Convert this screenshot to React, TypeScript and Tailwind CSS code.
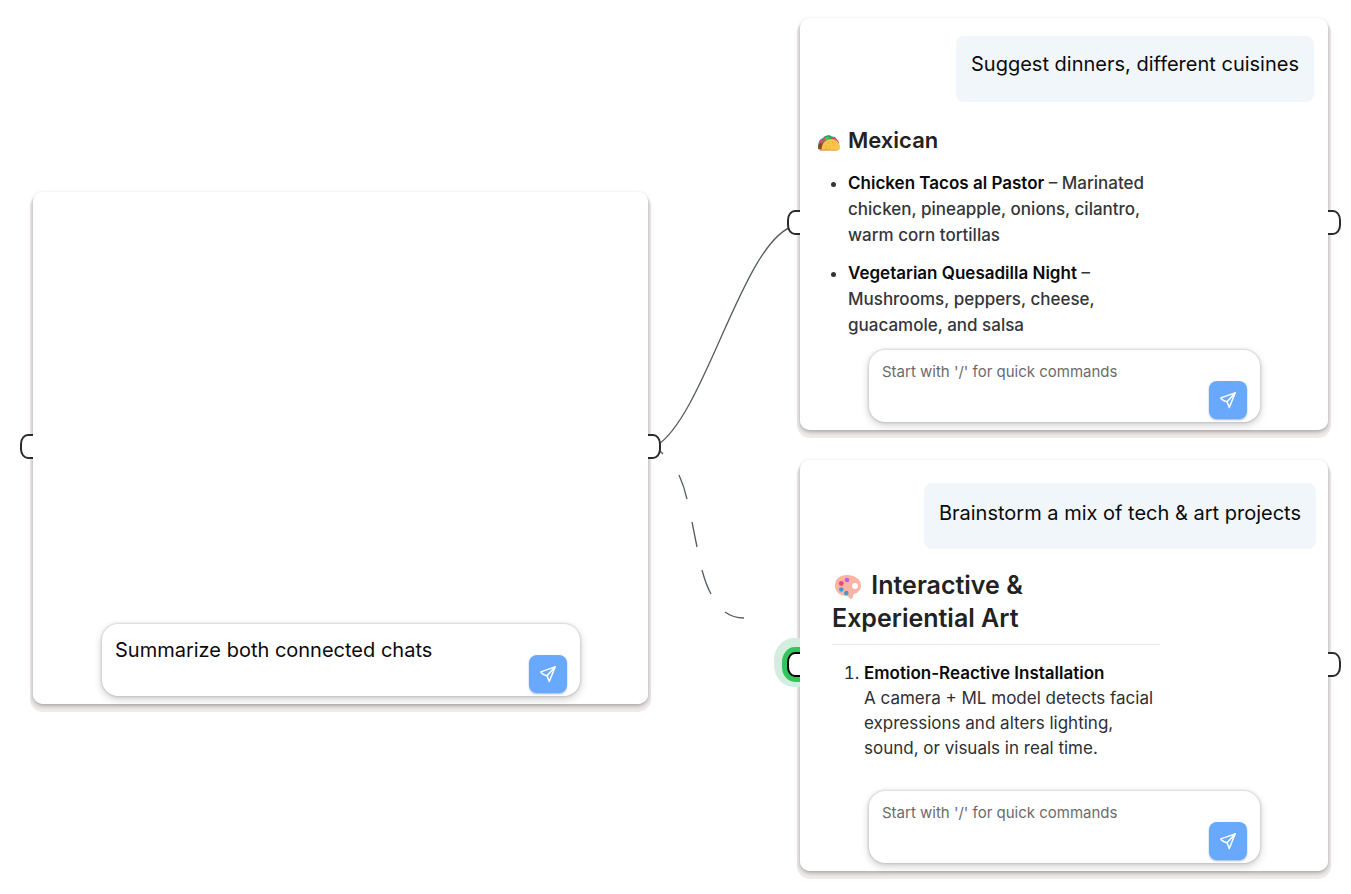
import type { ReactNode } from "react";

function SendIcon() {
  return (
    <svg viewBox="0 0 24 24" className="size-[18px]" fill="none" stroke="currentColor" strokeWidth="2" strokeLinejoin="round" strokeLinecap="round" aria-hidden="true">
      <path d="M21.5 2.5 2.5 9.2c0 2 5 4 8.200 5.200l3 7.600z" />
      <path d="M21.500 2.500 10.700 14.400" />
    </svg>
  );
}

function TacoIcon() {
  return (
    <svg viewBox="0 0 22 17" className="mt-1 h-[17px] w-[22px] shrink-0" aria-hidden="true">
      <path d="M0 13C0 8 2 5 5 4l2-2 4-1 3 1.500 3 .5 3 4-4 4-8 5z" fill="#2f9e56" />
      <path d="M1 9l1-3 2-.5 1 2-2 3zM5 4l3-1 1 2-3 2zM13 3l4 .5 4 4.500v4l-4-3z" fill="#e8457f" />
      <path d="M0 15c0-4 1-6 3-6l3 1-2 6z" fill="#8a4a2c" />
      <path d="M6.500 5.500 9 2.500l3 1-3 2.500z" fill="#45c076" />
      <path d="M3.500 16C3.500 9 8 5 13 5s9 4 9 8c0 2-.5 3-2 3z" fill="#f7c548" />
      <path d="M1 16h3l2-1 14 1-1 .8H2z" fill="#efa04b" />
      <path d="M7 12h1M10 9h1M11 13h1M15 11h1M14 8h1M8 14h1" stroke="#e29a2f" />
    </svg>
  );
}

function PaletteIcon() {
  return (
    <svg viewBox="0 0 26 24" className="mr-1 ml-[3px] inline-block h-6 w-[26px] align-[-5px]" aria-hidden="true">
      <path d="M12 0C5 0 0 4 0 10.500c0 6.500 5 10 11 10.500 3 0 3 3 5 3 3 0 1-4 3-5 4-1 7-4 7-8.500C26 4 19 0 12 0zM20 8a3 3 0 1 1 0 6 3 3 0 0 1 0-6z" fill="#fcb4a2" fillRule="evenodd" />
      <circle cx="12" cy="5" r="2.300" fill="#c35fdc" />
      <circle cx="6.300" cy="8.500" r="2.400" fill="#ea4a78" />
      <circle cx="6.300" cy="14.500" r="2.200" fill="#4299d8" />
      <circle cx="11.300" cy="18" r="2.300" fill="#4299d8" />
    </svg>
  );
}

function Handles({ active = false }: { active?: boolean }) {
  return (
    <>
      <span className={`absolute top-1/2 -left-[13px] h-[25px] w-8 -translate-y-3.5 rounded-[8px/10px] border-2 bg-white ${active ? "border-black shadow-[0_0_0_5px_#2dc75c,-1px_-2px_0_12px_#d3eee0]" : "border-[#2b2b2d]"}`} />
      <span className="absolute top-1/2 -right-[13px] h-[25px] w-8 -translate-y-3.5 rounded-[8px/10px] border-2 border-[#2b2b2d] bg-white" />
    </>
  );
}

function ChatNode({ place, active, children }: { place: string; active?: boolean; children: ReactNode }) {
  return (
    <section className={`absolute ${place}`}>
      <div className="absolute inset-0 rounded-[10px] shadow-[0_2px_4px_rgba(0,0,0,0.3),0_5px_0_3px_#eeebea]" />
      <Handles active={active} />
      <div className="relative flex h-full flex-col rounded-[10px] bg-white">{children}</div>
    </section>
  );
}

function Composer({ id, value, size }: { id: string; value?: string; size: string }) {
  return (
    <form className={`mt-auto mb-2 flex h-[72px] shrink-0 rounded-2xl bg-white shadow-[0_0_3px_rgba(0,0,0,0.25),0_3px_8px_rgba(0,0,0,0.2)] ${size}`}>
      <textarea
        id={id}
        aria-label="Message"
        defaultValue={value}
        placeholder="Start with '/' for quick commands"
        className={`min-w-0 grow resize-none overflow-hidden pl-[13px] outline-none placeholder:text-[#6b6b6b] ${value ? "pt-3 text-xl leading-7 text-[#0a0a0c]" : "pt-2.5 text-[15px] leading-6"}`}
      />
      <button type="button" aria-label="Send" className="mr-[13px] mb-[3px] flex size-[38px] shrink-0 items-center justify-center self-end rounded-lg bg-[#68a9fe] text-white shadow-[0_1px_2px_rgba(60,110,190,0.5)]">
        <SendIcon />
      </button>
    </form>
  );
}

function Prompt({ place, children }: { place: string; children: ReactNode }) {
  return <p className={`h-[66px] shrink-0 self-end rounded-lg bg-[#f1f6fa] px-[15px] text-xl leading-7 text-[#0a0a0c] ${place}`}>{children}</p>;
}

export default function App() {
  return (
    <main className="relative min-h-screen min-w-[1351px] overflow-hidden bg-white font-['Inter',sans-serif]">
      <svg className="absolute top-0 left-0 h-[894px] w-[1351px]" fill="none" stroke="#555b60" strokeWidth="1.300" aria-hidden="true">
        <path d="M656 446C705 416 743 240 794 226" />
        <path d="M658 449L663 454M679 475Q684 486 687 499M692 522L697 547M702 570Q706 585 711 594M725 612Q733 618 744 618" />
      </svg>

      <ChatNode place="top-[192px] left-[33px] h-[512px] w-[615px]">
        <Composer id="summary" value="Summarize both connected chats" size="ml-[69px] w-[478px]" />
      </ChatNode>

      <ChatNode place="top-[18px] left-[800px] h-[412px] w-[528px]">
        <Prompt place="mt-[18px] mr-3.5 pt-3.5">Suggest dinners, different cuisines</Prompt>
        <div className="ml-[18px] w-[340px] text-[17px] leading-[26px] font-medium text-[#34363a]">
          <h2 className="mt-6 flex items-center gap-2 text-[22px] leading-7 font-semibold text-[#222]">
            <TacoIcon />
            Mexican
          </h2>
          <ul className="mt-4 ml-[30px] list-disc space-y-3 marker:text-[#333]">
            <li><strong className="font-semibold text-[#0a0a0c]">Chicken Tacos al Pastor</strong> – Marinated chicken, pineapple, onions, cilantro, warm corn tortillas</li>
            <li><strong className="font-semibold text-[#0a0a0c]">Vegetarian Quesadilla Night</strong> – Mushrooms, peppers, cheese, guacamole, and salsa</li>
          </ul>
        </div>
        <Composer id="dinners" size="ml-[69px] w-[391px]" />
      </ChatNode>

      <ChatNode place="top-[460px] left-[800px] h-[411px] w-[528px]" active>
        <Prompt place="mt-[23px] mr-3 pt-4">Brainstorm a mix of tech &amp; art projects</Prompt>
        <div className="ml-8 w-[328px] text-[17px] leading-[25px] text-[#2d2f33]">
          <h2 className="mt-5 border-b border-[#e9e9e9] pb-[9px] text-[25px] leading-[33px] font-semibold text-[#222]">
            <PaletteIcon /> Interactive &amp;<br />Experiential Art
          </h2>
          <ol className="mt-4 ml-8 list-decimal">
            <li><strong className="font-semibold text-[#0a0a0c]">Emotion-Reactive Installation</strong><br />A camera + ML model detects facial expressions and alters lighting, sound, or visuals in real time.</li>
          </ol>
        </div>
        <Composer id="projects" size="ml-[69px] w-[391px]" />
      </ChatNode>
    </main>
  );
}
